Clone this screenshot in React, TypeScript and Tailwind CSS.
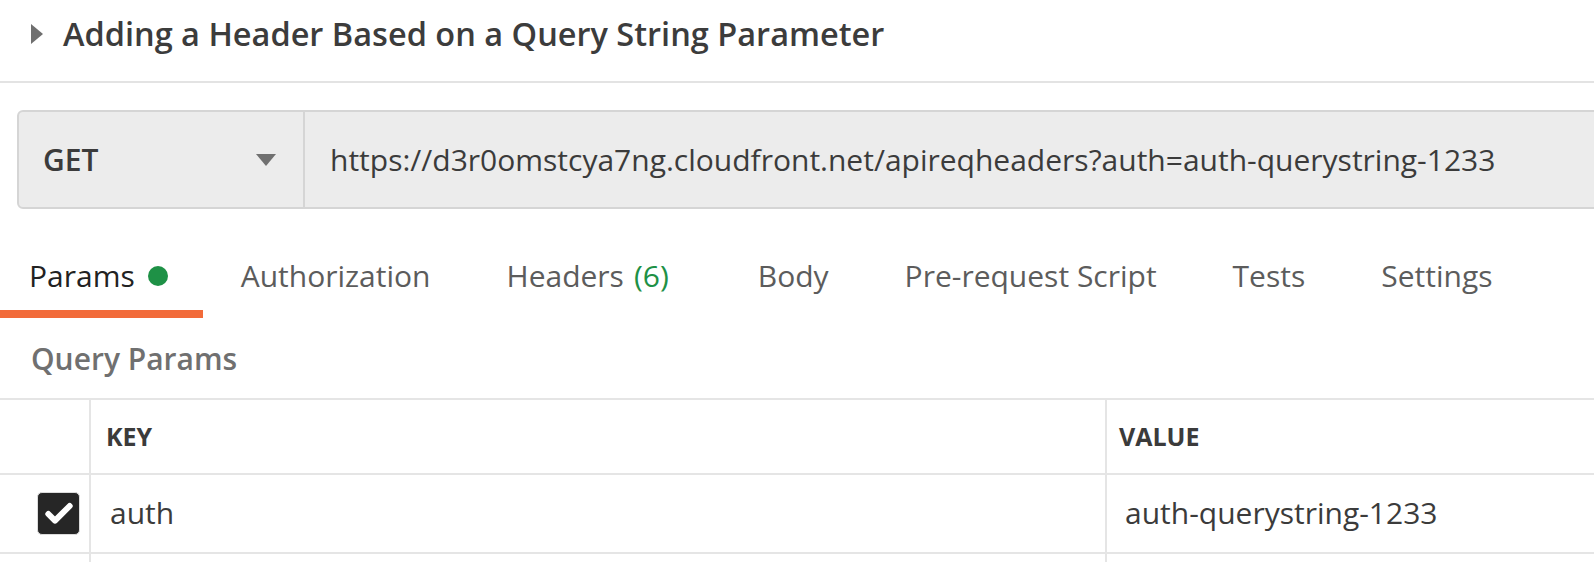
import { Check } from "lucide-react";

const font = { fontFamily: '"Open Sans", "Liberation Sans", sans-serif' };

const tabs = [
  { label: "Authorization" },
  { label: "Headers", count: "(6)" },
  { label: "Body", extra: true },
  { label: "Pre-request Script" },
  { label: "Tests" },
  { label: "Settings" },
];

export default function App() {
  return (
    <div
      className="w-[1594px] h-[562px] overflow-hidden bg-white text-[#3b3b3b] font-['Open_Sans',_'Liberation_Sans',_sans-serif]"
      style={font}
    >
      {/* collection item title */}
      <div className="h-[83px] border-b-2 border-[#e3e3e3] flex items-start pt-[12px]">
        <svg className="ml-[31px] mt-[12px] w-[12px] h-[20px]" viewBox="0 0 12 20">
          <path d="M0 0 L12 10 L0 20 Z" fill="#6f6f6f" />
        </svg>
        <h1 className="ml-[20px] text-[32.5px] leading-[44px] font-semibold text-[#3c3c3c]">
          Adding a Header Based on a Query String Parameter
        </h1>
      </div>

      {/* request url bar */}
      <div className="mt-[27px] ml-[17px] w-[1600px] h-[99px] flex bg-[#ececec] border-2 border-[#d5d5d5] rounded-l-[6px]">
        <div className="w-[286px] border-r-2 border-[#d5d5d5] flex items-center pl-[24px] pr-[27px] justify-between">
          <span className="text-[30px] font-semibold text-[#3b3b3b]">GET</span>
          <svg className="w-[20px] h-[12px]" viewBox="0 0 20 12">
            <path d="M0 0 L20 0 L10 12 Z" fill="#707070" />
          </svg>
        </div>
        <div className="flex items-center pl-[25px] text-[30px] text-[#3b3b3b] whitespace-nowrap">
          https://d3r0omstcya7ng.cloudfront.net/apireqheaders?auth=auth-querystring-1233
        </div>
      </div>

      {/* tabs */}
      <div className="flex items-start pt-[47px] text-[30px] leading-[40px]">
        <div className="pl-[29px] pr-[35px] pb-[14px] border-b-[8px] border-[#f26b3a] flex items-center text-[#222]">
          Params
          <span className="ml-[13px] w-[20px] h-[20px] rounded-full bg-[#1e9146]" />
        </div>
        {tabs.map((t) => (
          <div
            key={t.label}
            className={`px-[38px] text-[#5c5c5c] whitespace-nowrap ${t.extra ? "ml-[13px]" : ""}`}
          >
            {t.label}
            {t.count && <span className="ml-[10px] text-[#1e9146]">{t.count}</span>}
          </div>
        ))}
      </div>

      <div className="pt-[22px] pl-[31px] text-[30px] leading-[38px] font-semibold text-[#707070]">
        Query Params
      </div>

      {/* params table */}
      <div className="mt-[20px] border-t-2 border-[#e5e5e5]">
        <div className="flex h-[75px] border-b-2 border-[#e5e5e5]">
          <div className="w-[91px] border-r-2 border-[#e5e5e5]" />
          <div className="w-[1016px] border-r-2 border-[#e5e5e5] flex items-center pl-[15px] text-[25px] font-bold text-[#3b3b3b]">
            KEY
          </div>
          <div className="flex-1 flex items-center pl-[12px] text-[25px] font-bold text-[#3b3b3b]">
            VALUE
          </div>
        </div>
        <div className="flex h-[79px] border-b-2 border-[#e5e5e5]">
          <div className="w-[91px] border-r-2 border-[#e5e5e5] flex items-center pl-[37px]">
            <div className="w-[43px] h-[43px] rounded-[5px] bg-[#262626] border border-[#dcdcdc] flex items-center justify-center">
              <Check className="w-[32px] h-[32px] text-white" strokeWidth={4.5} />
            </div>
          </div>
          <div className="w-[1016px] border-r-2 border-[#e5e5e5] flex items-center pl-[19px] pb-[3px] text-[30px] text-[#3b3b3b]">
            auth
          </div>
          <div className="flex-1 flex items-center pl-[18px] pb-[3px] text-[30px] text-[#3b3b3b]">
            auth-querystring-1233
          </div>
        </div>
        <div className="flex h-[40px]">
          <div className="w-[91px] border-r-2 border-[#e5e5e5]" />
          <div className="w-[1016px] border-r-2 border-[#e5e5e5]" />
        </div>
      </div>
    </div>
  );
}
